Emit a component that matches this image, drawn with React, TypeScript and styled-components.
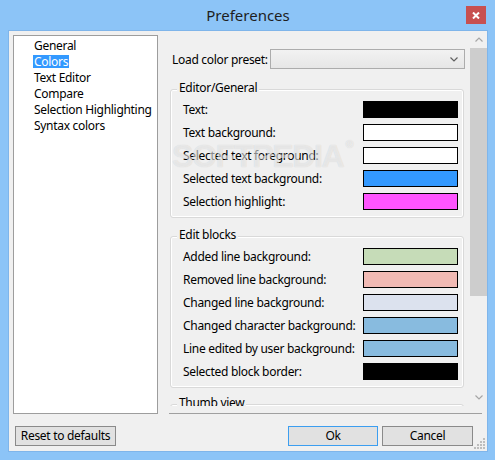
import styled, { createGlobalStyle } from 'styled-components';

const GlobalStyle = createGlobalStyle`
  html, body {
    margin: 0;
    padding: 0;
    background: #8cc4f7;
  }
  body {
    font-family: "Noto Sans", "Segoe UI", sans-serif;
    font-size: 12px;
    letter-spacing: -0.3px;
    color: #000;
  }
`;

const treeItems = ['General', 'Colors', 'Text Editor', 'Compare', 'Selection Highlighting', 'Syntax colors'];

const editorColors = [
  { label: 'Text:', color: '#000000' },
  { label: 'Text background:', color: '#ffffff' },
  { label: 'Selected text foreground:', color: '#ffffff' },
  { label: 'Selected text background:', color: '#3399ff' },
  { label: 'Selection highlight:', color: '#ff55ff' },
];

const blockColors = [
  { label: 'Added line background:', color: '#c6dcb8' },
  { label: 'Removed line background:', color: '#f1bab4' },
  { label: 'Changed line background:', color: '#dce2ee' },
  { label: 'Changed character background:', color: '#88bbdf' },
  { label: 'Line edited by user background:', color: '#88bbdf' },
  { label: 'Selected block border:', color: '#000000' },
];

const Window = styled.div`
  width: 495px;
  height: 460px;
  box-sizing: border-box;
  padding: 0 7px 8px 8px;
  display: flex;
  flex-direction: column;
  background: #8cc4f7;
`;

const TitleBar = styled.div`
  height: 30px;
  flex: none;
  display: grid;
  grid-template-columns: 1fr auto 1fr;
  align-items: center;
`;

const Title = styled.div`
  grid-column: 2;
  font-size: 15px;
  line-height: 20px;
  letter-spacing: 0;
  color: #1e1e1e;
  padding-bottom: 1px;
`;

const CloseButton = styled.div`
  grid-column: 3;
  justify-self: end;
  align-self: start;
  margin-top: 6px;
  margin-right: 2px;
  width: 20px;
  height: 18px;
  background: #c75050;
  display: flex;
  align-items: center;
  justify-content: center;
`;

const Client = styled.div`
  flex: 1;
  position: relative;
  background: #f0f0f0;
  border: 1px solid #7fb5ea;
  display: flex;
  flex-direction: column;
`;

const Main = styled.div`
  height: 383px;
  flex: none;
  display: flex;
`;

const Tree = styled.ul`
  list-style: none;
  margin: 4px 7px 0 4px;
  padding: 2px 0 0 19px;
  width: 145px;
  flex: none;
  box-sizing: border-box;
  background: #fff;
  border: 1px solid #9d9d9d;
`;

const TreeItem = styled.li`
  height: 16px;
`;

const TreeLabel = styled.span<{ $selected?: boolean }>`
  display: inline-block;
  vertical-align: top;
  margin-top: 1px;
  height: 13px;
  line-height: 13px;
  padding: 0 1px;
  white-space: nowrap;
  background: ${p => (p.$selected ? '#3399ff' : 'transparent')};
  color: ${p => (p.$selected ? '#fff' : '#000')};
`;

const RightColumn = styled.div`
  flex: 1;
  min-width: 0;
  display: flex;
  flex-direction: column;
`;

const Viewport = styled.div`
  height: 375px;
  flex: none;
  display: flex;
  overflow: hidden;
`;

const Content = styled.div`
  flex: 1;
  min-width: 0;
  position: relative;
  overflow: hidden;
  padding: 0 6px 0 5px;
`;

const PresetRow = styled.div`
  margin-top: 18px;
  height: 20px;
  display: flex;
  align-items: center;
  margin-right: -1px;
`;

const Label = styled.span`
  white-space: nowrap;
`;

const PresetLabel = styled(Label)`
  margin-left: 2px;
`;

const Combo = styled.div`
  margin-left: auto;
  width: 195px;
  height: 20px;
  flex: none;
  box-sizing: border-box;
  border: 1px solid #acacac;
  background: linear-gradient(#f2f2f2, #e6e6e6);
  display: flex;
  align-items: center;
  justify-content: flex-end;
  padding-right: 6px;
`;

const GroupBox = styled.div<{ $gap: number }>`
  position: relative;
  margin-top: ${p => p.$gap}px;
  border: 1px solid #d9d9d9;
  border-radius: 3px;
  box-shadow: inset 0 0 0 1px #fff;
  padding: 8px 5px 4px 12px;
`;

const GroupTitle = styled.span`
  position: absolute;
  top: -10px;
  left: 6px;
  padding: 0 2px;
  line-height: 16px;
  background: #f0f0f0;
  white-space: nowrap;
`;

const ColorRow = styled.div`
  height: 23px;
  display: flex;
  align-items: center;
  justify-content: space-between;
`;

const Swatch = styled.div<{ $color: string }>`
  width: 95px;
  height: 17px;
  flex: none;
  box-sizing: border-box;
  border: 1px solid #000;
  background: ${p => p.$color};
`;

const Watermark = styled.div`
  position: absolute;
  left: 7px;
  top: 107px;
  font-family: "Liberation Sans", Arial, sans-serif;
  font-weight: bold;
  font-size: 32px;
  letter-spacing: -1.3px;
  color: rgba(255, 255, 255, 0.55);
  text-shadow: 0 0 1px rgba(0, 0, 0, 0.16);
  pointer-events: none;

  sup {
    font-size: 11px;
    vertical-align: top;
    margin-left: 2px;
  }
`;

const ScrollBar = styled.div`
  width: 17px;
  flex: none;
  display: flex;
  flex-direction: column;
  background: #f0f0f0;
`;

const ScrollArrow = styled.div`
  height: 17px;
  flex: none;
  display: flex;
  align-items: center;
  justify-content: center;
`;

const ScrollTrack = styled.div`
  flex: 1;
`;

const ScrollThumb = styled.div`
  height: 248px;
  background: #cdcdcd;
`;

const Separator = styled.div`
  margin: 7px 5px 0 4px;
  height: 1px;
  background: #a0a0a0;
`;

const ButtonRow = styled.div`
  margin-top: 12px;
  display: flex;
  gap: 4px;
  padding: 0 14px 0 6px;
`;

const Button = styled.button<{ $width: number; $default?: boolean }>`
  width: ${p => p.$width}px;
  height: 20px;
  padding: 0;
  font-family: inherit;
  font-size: 12px;
  letter-spacing: -0.3px;
  line-height: 16px;
  color: #000;
  background: #e1e1e1;
  border: 1px solid ${p => (p.$default ? '#3c9ef0' : '#8a8a8a')};
`;

const Spacer = styled.div`
  flex: 1;
`;

const Grip = styled.svg`
  position: absolute;
  right: 2px;
  bottom: 2px;
`;

const Chevron = ({ dir, color }: { dir: 'up' | 'down'; color: string }) => (
  <svg width="8" height="5" viewBox="0 0 8 5">
    <path
      d={dir === 'down' ? 'M0.5 0.5 L4 4 L7.5 0.5' : 'M0.5 4.5 L4 1 L7.5 4.5'}
      fill="none"
      stroke={color}
      strokeWidth="1.2"
    />
  </svg>
);

const gripDots = [
  [9, 0],
  [6, 3], [9, 3],
  [3, 6], [6, 6], [9, 6],
  [0, 9], [3, 9], [6, 9], [9, 9],
];

export default function App() {
  return (
    <>
      <GlobalStyle />
      <Window>
        <TitleBar>
          <Title>Preferences</Title>
          <CloseButton>
            <svg width="8" height="7" viewBox="0 0 8 7">
              <path d="M1 0.5 L7 6.5 M7 0.5 L1 6.5" stroke="#fff" strokeWidth="2" />
            </svg>
          </CloseButton>
        </TitleBar>
        <Client>
          <Main>
            <Tree>
              {treeItems.map(item => (
                <TreeItem key={item}>
                  <TreeLabel $selected={item === 'Colors'}>{item}</TreeLabel>
                </TreeItem>
              ))}
            </Tree>
            <RightColumn>
              <Viewport>
                <Content>
                  <PresetRow>
                    <PresetLabel>Load color preset:</PresetLabel>
                    <Combo>
                      <Chevron dir="down" color="#606060" />
                    </Combo>
                  </PresetRow>
                  <GroupBox $gap={20}>
                    <GroupTitle>Editor/General</GroupTitle>
                    {editorColors.map(c => (
                      <ColorRow key={c.label}>
                        <Label>{c.label}</Label>
                        <Swatch $color={c.color} />
                      </ColorRow>
                    ))}
                  </GroupBox>
                  <GroupBox $gap={18}>
                    <GroupTitle>Edit blocks</GroupTitle>
                    {blockColors.map(c => (
                      <ColorRow key={c.label}>
                        <Label>{c.label}</Label>
                        <Swatch $color={c.color} />
                      </ColorRow>
                    ))}
                  </GroupBox>
                  <GroupBox $gap={16}>
                    <GroupTitle>Thumb view</GroupTitle>
                    <ColorRow />
                  </GroupBox>
                  <Watermark>
                    SOFTPEDIA<sup>®</sup>
                  </Watermark>
                </Content>
                <ScrollBar>
                  <ScrollArrow>
                    <Chevron dir="up" color="#a6a6a6" />
                  </ScrollArrow>
                  <ScrollTrack>
                    <ScrollThumb />
                  </ScrollTrack>
                  <ScrollArrow>
                    <Chevron dir="down" color="#a6a6a6" />
                  </ScrollArrow>
                </ScrollBar>
              </Viewport>
              <Separator />
            </RightColumn>
          </Main>
          <ButtonRow>
            <Button $width={101}>Reset to defaults</Button>
            <Spacer />
            <Button $width={90} $default>Ok</Button>
            <Button $width={91}>Cancel</Button>
          </ButtonRow>
          <Grip width="11" height="11" viewBox="0 0 11 11">
            {gripDots.map(([x, y]) => (
              <rect key={`${x}-${y}`} x={x} y={y} width="2" height="2" fill="#bdbdbd" />
            ))}
          </Grip>
        </Client>
      </Window>
    </>
  );
}
